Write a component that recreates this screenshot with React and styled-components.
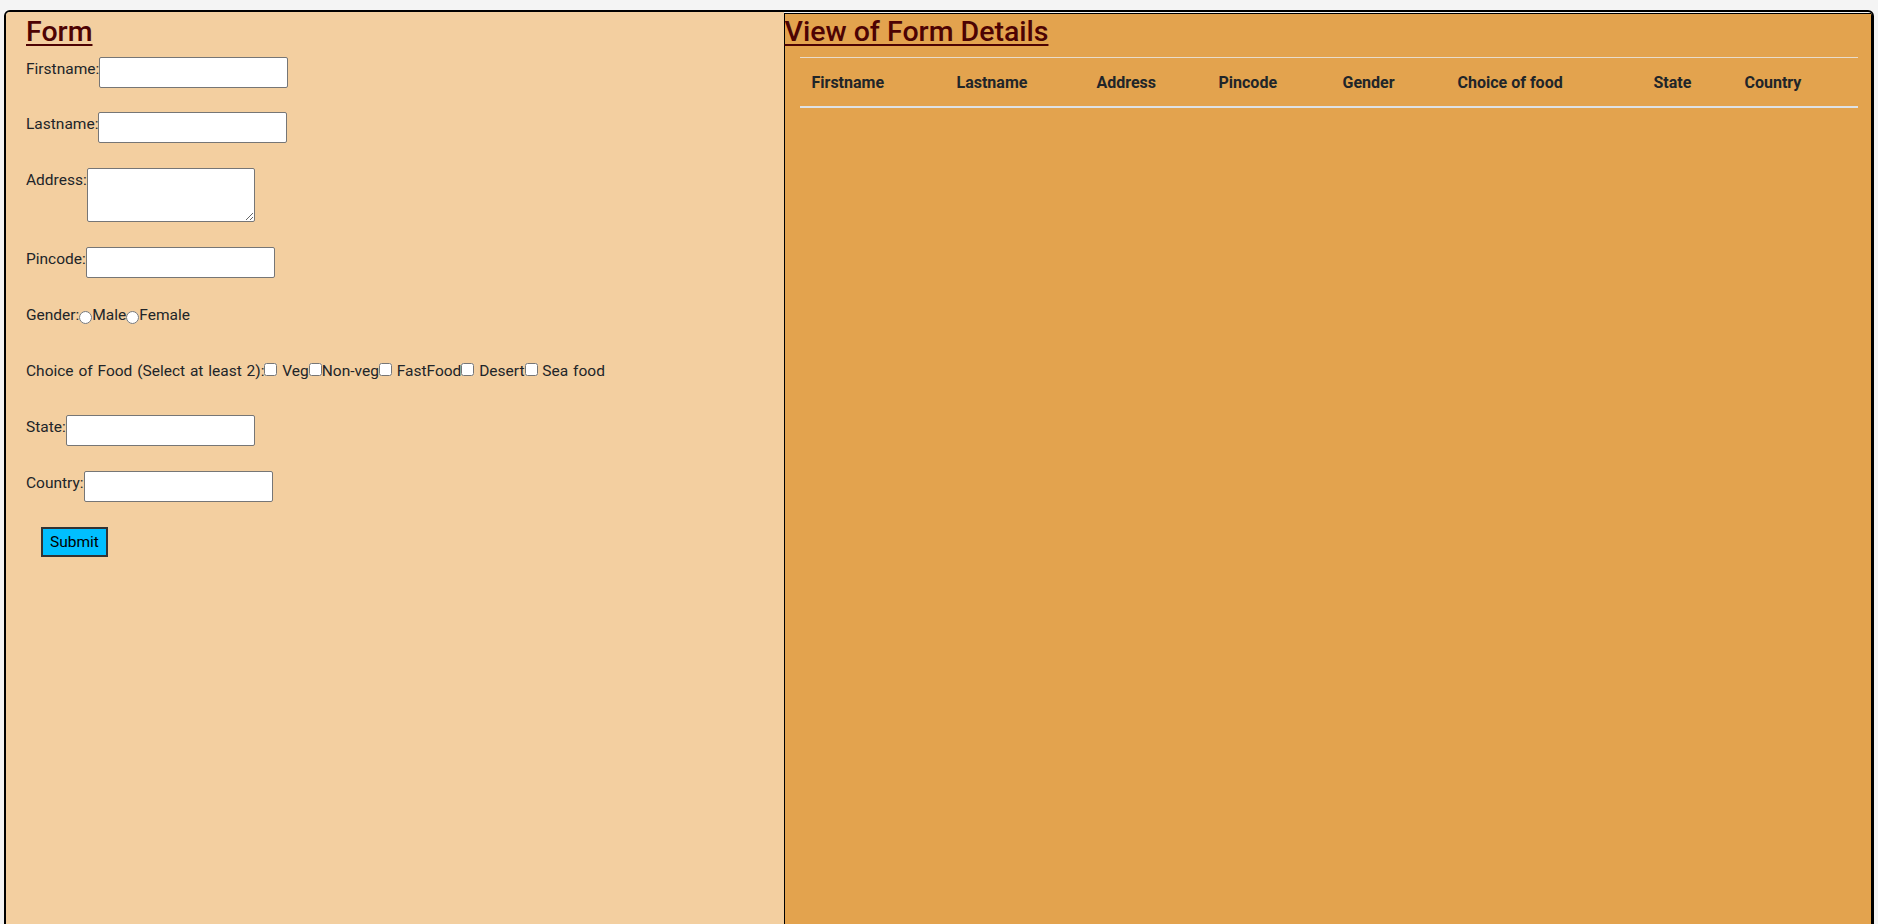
import React from "react";
import styled, { createGlobalStyle } from "styled-components";

const GlobalStyle = createGlobalStyle`
  html, body {
    margin: 0;
    background: #f4f4f4;
    overflow: hidden;
  }
  body {
    padding: 10px 4px 0;
    font-family: Roboto, "Liberation Sans", sans-serif;
    font-size: 16px;
    color: #212529;
  }
  * { box-sizing: border-box; }
`;

const Frame = styled.div`
  display: flex;
  align-items: stretch;
  height: 960px;
  border: 2px solid #000;
  border-radius: 6px 6px 0 0;
  background: #f4f4f4;
  overflow: hidden;
`;

const FormPanel = styled.section`
  flex: 0 0 41.667%;
  background: #f3cfa0;
  padding: 3px 20px 0;
  font-size: 15.5px;
`;

const ViewPanel = styled.section`
  flex: 1 1 auto;
  margin-top: 1px;
  background: #e3a34e;
  border: 1px solid #000;
  padding-top: 1px;
`;

const Heading = styled.h3`
  margin: 0 0 8px;
  height: 33.6px;
  font-size: 28.5px;
  line-height: 33.6px;
  font-weight: 500;
  color: #4d0303;
  text-decoration: underline;
  text-decoration-thickness: 2px;
  text-underline-offset: 3px;
`;

const Form = styled.form`
  display: flex;
  flex-direction: column;
  align-items: flex-start;
  gap: 24.9px;
`;

const Row = styled.div`
  display: flex;
  align-items: flex-start;
  min-height: 31px;
`;

const InlineRow = styled.div`
  min-height: 31px;
  line-height: 24px;
  white-space: nowrap;
  word-spacing: 1px;
`;

const Label = styled.label`
  line-height: 24px;
  white-space: nowrap;
`;

const TextInput = styled.input`
  width: 189px;
  height: 31px;
  margin: 0;
  padding: 1px 2px;
  border: 1px solid #767676;
  border-radius: 2px;
  background: #fff;
`;

const TextArea = styled.textarea`
  width: 168px;
  height: 54px;
  margin: 0;
  padding: 2px;
  border: 1px solid #767676;
  border-radius: 2px;
  background: #fff;
`;

const Radio = styled.input.attrs({ type: "radio" })`
  width: 13px;
  height: 13px;
  margin: 0;
  vertical-align: -4px;
`;

const Check = styled.input.attrs({ type: "checkbox" })`
  width: 13px;
  height: 13px;
  margin: 0;
  vertical-align: 0;
`;

const SubmitButton = styled.button`
  margin-left: 15px;
  width: 67px;
  height: 30px;
  padding: 0;
  background: #00bfff;
  border: 2px solid #333;
  border-radius: 0;
  color: #000;
  font: inherit;
  font-size: 15.5px;
  line-height: 24px;
`;

const TableWrap = styled.div`
  padding: 0 13px 0 15px;
`;

const Table = styled.table`
  width: 100%;
  border-collapse: collapse;
  table-layout: fixed;
`;

const Th = styled.th`
  width: ${(p) => (p.$w ? `${p.$w}px` : "auto")};
  padding: 12px;
  padding-top: 13px;
  padding-bottom: 11px;
  text-align: left;
  vertical-align: bottom;
  font-weight: 700;
  line-height: 24px;
  color: #212529;
  border-top: 1px solid #e9dccb;
  border-bottom: 2px solid #dee2e6;
  white-space: nowrap;
`;

const columns = [
  { name: "Firstname", w: 145 },
  { name: "Lastname", w: 140 },
  { name: "Address", w: 122 },
  { name: "Pincode", w: 124 },
  { name: "Gender", w: 115 },
  { name: "Choice of food", w: 196 },
  { name: "State", w: 91 },
  { name: "Country" },
];

const foods = [" Veg", "Non-veg", " FastFood", " Desert", " Sea food"];

export default function App() {
  return (
    <>
      <GlobalStyle />
      <Frame>
        <FormPanel>
          <Heading>Form</Heading>
          <Form onSubmit={(e) => e.preventDefault()}>
            <Row>
              <Label>Firstname:</Label>
              <TextInput type="text" />
            </Row>
            <Row>
              <Label>Lastname:</Label>
              <TextInput type="text" />
            </Row>
            <Row>
              <Label>Address:</Label>
              <TextArea />
            </Row>
            <Row>
              <Label>Pincode:</Label>
              <TextInput type="text" />
            </Row>
            <InlineRow>
              Gender:<Radio name="gender" />Male<Radio name="gender" />Female
            </InlineRow>
            <InlineRow>
              Choice of Food (Select at least 2):
              {foods.map((f) => (
                <React.Fragment key={f}>
                  <Check />
                  {f}
                </React.Fragment>
              ))}
            </InlineRow>
            <Row>
              <Label>State:</Label>
              <TextInput type="text" />
            </Row>
            <Row>
              <Label>Country:</Label>
              <TextInput type="text" />
            </Row>
            <SubmitButton type="submit">Submit</SubmitButton>
          </Form>
        </FormPanel>
        <ViewPanel>
          <Heading>View of Form Details</Heading>
          <TableWrap>
            <Table>
              <thead>
                <tr>
                  {columns.map((c) => (
                    <Th key={c.name} $w={c.w}>
                      {c.name}
                    </Th>
                  ))}
                </tr>
              </thead>
            </Table>
          </TableWrap>
        </ViewPanel>
      </Frame>
    </>
  );
}
